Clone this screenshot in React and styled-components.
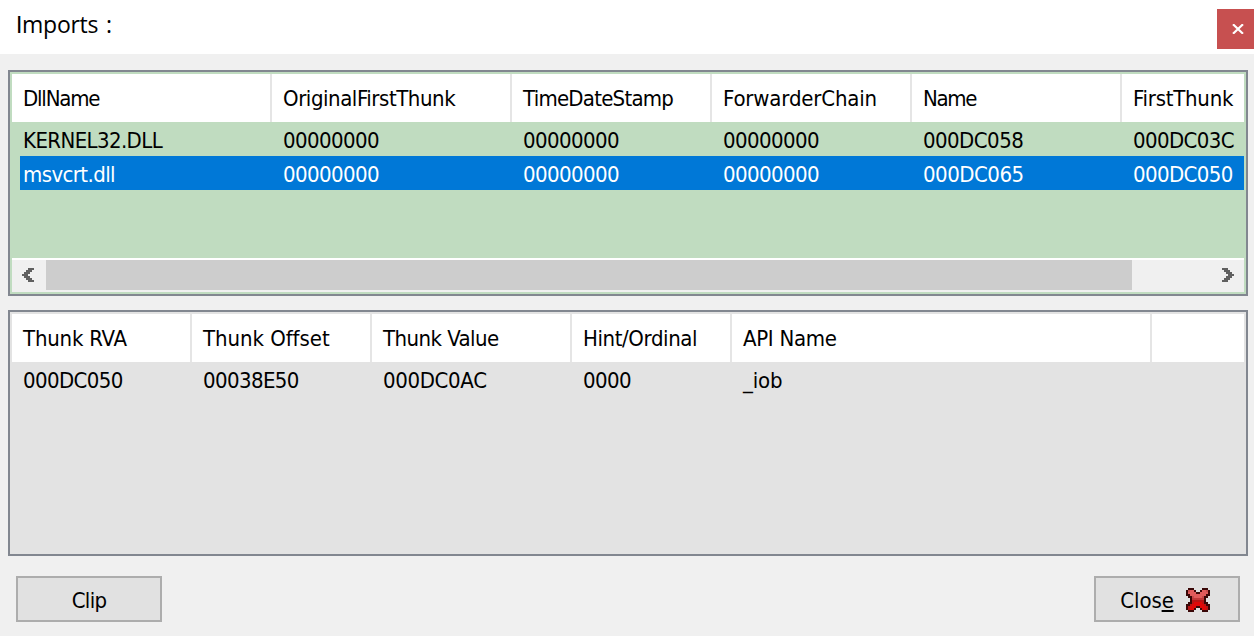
import React from "react";
import styled, { createGlobalStyle } from "styled-components";

const Global = createGlobalStyle`
  * { box-sizing: border-box; }
  html, body { margin: 0; padding: 0; background: #f0f0f0; }
  body { overflow: hidden; }
`;

const Dialog = styled.main`
  display: flex;
  flex-direction: column;
  width: 1254px;
  height: 636px;
  background: #f0f0f0;
  color: #000;
  font-family: "DejaVu Sans Condensed", "DejaVu Sans", sans-serif;
  font-stretch: condensed;
  font-size: 22px;
  cursor: default;
`;

const TitleBar = styled.header`
  display: flex;
  justify-content: space-between;
  align-items: flex-start;
  flex: none;
  height: 54px;
  padding: 9px 0 0 16px;
  background: #fff;
`;

const Title = styled.h1`
  margin: 0;
  font: 400 23px/30px "Open Sans", sans-serif;
  font-stretch: normal;
  letter-spacing: -0.25px;
  word-spacing: 2px;
`;

const Initial = styled.span`
  font-family: Roboto, sans-serif;
`;

const CloseBox = styled.button`
  display: flex;
  align-items: center;
  justify-content: center;
  width: 37px;
  height: 40px;
  padding: 0 0 0 5px;
  border: 0;
  background: #c75050;
`;

const Body = styled.div`
  display: flex;
  flex-direction: column;
  padding: 16px 6px 0 8px;
`;

const ListView = styled.section`
  display: flex;
  flex-direction: column;
  height: ${(p) => p.$height}px;
  margin-bottom: ${(p) => p.$gap}px;
  padding: 2px;
  border: 2px solid #828790;
  background: ${(p) => p.$fill};
`;

const Columns = styled.div`
  display: grid;
  grid-template-columns: ${(p) => p.$tracks};
  flex: none;
`;

const HeaderRow = styled(Columns)`
  height: 48px;
  background: #fff;
`;

const HeaderCell = styled.div`
  padding-left: 11px;
  border-right: ${(p) => (p.$last ? "0" : "2px solid #e5e5e5")};
  line-height: 50px;
  height: 48px;
  white-space: nowrap;
  overflow: hidden;
`;

const Row = styled(Columns)`
  height: 34px;
  line-height: 37px;
  color: ${(p) => (p.$selected ? "#fff" : "#000")};
  background: ${(p) => (p.$selected ? "linear-gradient(90deg, transparent 8px, #0078d7 8px)" : "transparent")};
`;

const Cell = styled.div`
  height: 34px;
  padding-left: 11px;
  white-space: nowrap;
`;

const Label = styled.span`
  letter-spacing: ${(p) => p.$track}px;
`;

const ScrollBar = styled.div`
  display: flex;
  height: 34px;
  margin-top: auto;
  border-top: 2px solid #fff;
  background: #f0f0f0;
`;

const ScrollArrow = styled.div`
  display: flex;
  align-items: center;
  justify-content: center;
  width: 34px;
  height: 30px;
  padding: ${(p) => (p.$right ? "0 0 0 2px" : "0 2px 0 0")};
`;

const Track = styled.div`
  flex: 1;
`;

const Thumb = styled.div`
  width: 1086px;
  height: 30px;
  background: #cdcdcd;
`;

const Footer = styled.footer`
  display: flex;
  justify-content: space-between;
  padding: 0 8px;
`;

const Button = styled.button`
  display: flex;
  align-items: center;
  justify-content: center;
  gap: 12px;
  width: 146px;
  height: 46px;
  padding: 2px 0 0;
  padding-right: ${(p) => p.$inset ?? 0}px;
  border: 2px solid #adadad;
  background: #e1e1e1;
  color: #000;
  font: inherit;
  line-height: 40px;
`;

const ButtonText = styled(Label)`
  height: 40px;
  line-height: 42px;
`;

const Mnemonic = styled.span`
  text-decoration: underline;
  text-decoration-thickness: 2px;
  text-underline-offset: 2px;
  text-decoration-skip-ink: none;
`;

const CROSS = [
  ".kkk....kkk.",
  "kbaak..kaabk",
  "kaaaakkaaaak",
  "kkaaaaaaaakk",
  ".kkbaaaabkk.",
  "..kcccccck..",
  "..kddddddk..",
  ".kkdeeeedkk.",
  "kkdeeeeeedkk",
  "kdeeekkeeedk",
  "kdeek..keedk",
  ".kkk....kkk.",
];
const CROSS_COLORS = { k: "#3a0808", a: "#e05c5c", b: "#c84a4a", c: "#c03a3a", d: "#b81414", e: "#e00808" };

function RedCross() {
  return (
    <svg width="24" height="24" viewBox="0 0 12 12" shapeRendering="crispEdges">
      {CROSS.flatMap((line, y) =>
        [...line].map((c, x) =>
          c === "." ? null : <rect key={`${x}-${y}`} x={x} y={y} width="1" height="1" fill={CROSS_COLORS[c]} />
        )
      )}
    </svg>
  );
}

const Chevron = ({ flip }) => (
  <svg width="12" height="14" viewBox="0 0 6 7" shapeRendering="crispEdges" fill="#606060">
    <g transform={flip ? "translate(6 0) scale(-1 1)" : undefined}>
      <path d="M3 0H6V1H5V2H4V3H3V4H4V5H5V6H6V7H3V6H2V5H1V4H0V3H1V2H2V1H3Z" />
    </g>
  </svg>
);

const IMPORT_TRACKS = "260px 240px 200px 200px 210px 1fr";
const IMPORT_HEADS = ["DllName", "OriginalFirstThunk", "TimeDateStamp", "ForwarderChain", "Name", "FirstThunk"];
const IMPORT_ROWS = [
  ["KERNEL32.DLL", "00000000", "00000000", "00000000", "000DC058", "000DC03C"],
  ["msvcrt.dll", "00000000", "00000000", "00000000", "000DC065", "000DC050"],
];

const THUNK_TRACKS = "180px 180px 200px 160px 420px 1fr";
const THUNK_HEADS = ["Thunk RVA", "Thunk Offset", "Thunk Value", "Hint/Ordinal", "API Name", ""];
const THUNK_ROW = ["000DC050", "00038E50", "000DC0AC", "0000", "_iob", ""];

const TRACKING = {
  DllName: -1.2,
  OriginalFirstThunk: -0.44,
  TimeDateStamp: -0.76,
  ForwarderChain: -0.17,
  Name: -1.35,
  FirstThunk: -0.25,
  "Thunk RVA": -0.2,
  "Thunk Offset": -0.05,
  "Thunk Value": -0.55,
  "Hint/Ordinal": -0.4,
  "API Name": -0.3,
  "000DC0AC": -0.35,
  "000DC058": -0.55,
  "000DC065": -0.5,
  "_iob": -0.2,
};
const Text = ({ children }) => <Label $track={TRACKING[children] ?? -0.6}>{children}</Label>;

function Header({ tracks, heads }) {
  return (
    <HeaderRow $tracks={tracks}>
      {heads.map((h, i) => (
        <HeaderCell key={i} $last={i === heads.length - 1}><Text>{h}</Text></HeaderCell>
      ))}
    </HeaderRow>
  );
}

function DataRow({ tracks, cells, selected }) {
  return (
    <Row $tracks={tracks} $selected={selected}>
      {cells.map((c, i) => <Cell key={i}><Text>{c}</Text></Cell>)}
    </Row>
  );
}

export default function App() {
  return (
    <>
      <Global />
      <Dialog>
        <TitleBar>
          <Title><Initial>I</Initial>mports :</Title>
          <CloseBox aria-label="Close">
            <svg width="12" height="10" viewBox="0 0 12 10" fill="none" stroke="#fff" strokeWidth="2.2">
              <path d="M1 0.3L11 9.7M11 0.3L1 9.7" />
            </svg>
          </CloseBox>
        </TitleBar>
        <Body>
          <ListView $height={226} $gap={14} $fill="#c0dcc0">
            <Header tracks={IMPORT_TRACKS} heads={IMPORT_HEADS} />
            {IMPORT_ROWS.map((r, i) => <DataRow key={i} tracks={IMPORT_TRACKS} cells={r} selected={i === 1} />)}
            <ScrollBar>
              <ScrollArrow><Chevron /></ScrollArrow>
              <Track><Thumb /></Track>
              <ScrollArrow $right><Chevron flip /></ScrollArrow>
            </ScrollBar>
          </ListView>
          <ListView $height={246} $gap={20} $fill="#e3e3e3">
            <Header tracks={THUNK_TRACKS} heads={THUNK_HEADS} />
            <DataRow tracks={THUNK_TRACKS} cells={THUNK_ROW} />
          </ListView>
          <Footer>
            <Button><ButtonText $track={-0.7}>Clip</ButtonText></Button>
            <Button $inset={4}>
              <ButtonText $track={-0.1}>Clos<Mnemonic>e</Mnemonic></ButtonText>
              <RedCross />
            </Button>
          </Footer>
        </Body>
      </Dialog>
    </>
  );
}
